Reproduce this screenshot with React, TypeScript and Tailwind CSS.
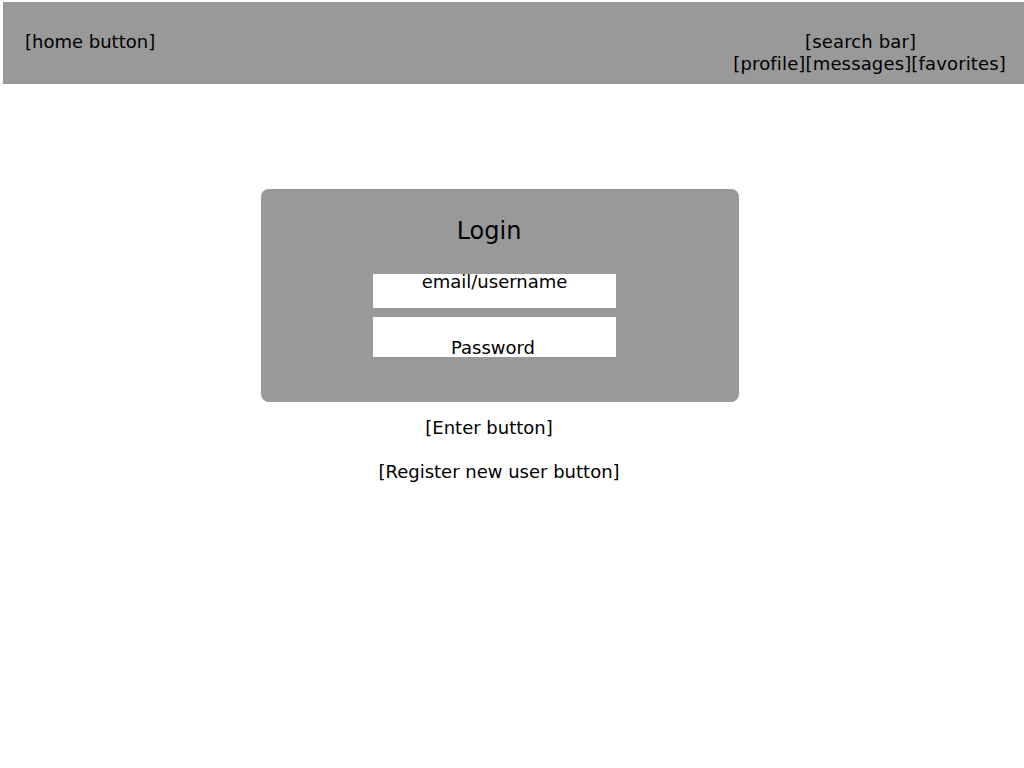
// Login page wireframe
const font = { fontFamily: '"DejaVu Sans", "Liberation Sans", sans-serif' };

function Header() {
  return (
    <header className="ml-[3px] mt-[2px] flex h-[82px] items-start justify-between bg-[#999999] pt-[29px] text-[18px] leading-[22px] text-black">
      <div className="pl-[22px]">[home button]</div>
      <div className="pr-[18px] text-center tracking-[0.15px]">
        <div className="pr-[18px]">[search bar]</div>
        <div>[profile][messages][favorites]</div>
      </div>
    </header>
  );
}

function LoginCard() {
  return (
    <div className="ml-[261px] mt-[105px] w-[478px] rounded-[8px] bg-[#999999] pt-[28px] pb-[45px]">
      <h1 className="pr-[22px] text-center text-[24px] leading-[28px] text-black">Login</h1>
      <div className="ml-[112px] mt-[29px] flex w-[243px] flex-col gap-[9px]">
        <div className="h-[34px] bg-white text-center text-[18px] leading-[15px] text-black">email/username</div>
        <div className="flex h-[40px] items-end justify-center bg-white pr-[3px] text-[18px] leading-none text-black">
          Password
        </div>
      </div>
    </div>
  );
}

export default function App() {
  return (
    <div className="min-h-[768px] w-[1024px] bg-white" style={font}>
      <Header />
      <LoginCard />
      <div className="ml-[261px] w-[478px] text-[18px] leading-[22px] text-black">
        <div className="mt-[15px] pr-[22px] text-center">[Enter button]</div>
        <div className="mt-[22px] pr-[2px] text-center">[Register new user button]</div>
      </div>
    </div>
  );
}
